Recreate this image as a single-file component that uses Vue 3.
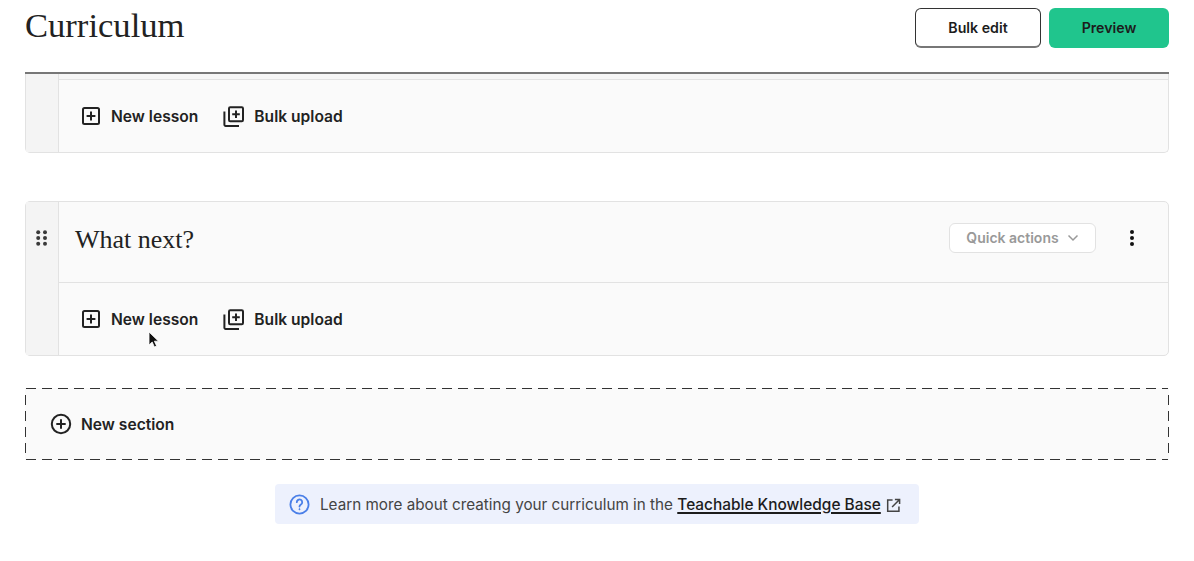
<script setup>
const actions = [
  { id: 'lesson', label: 'New lesson' },
  { id: 'bulk', label: 'Bulk upload' },
]
</script>

<template>
  <div class="page">
    <header class="topbar">
      <h1 class="title">Curriculum</h1>
      <div class="top-buttons">
        <button class="btn btn-outline">Bulk edit</button>
        <button class="btn btn-green">Preview</button>
      </div>
    </header>

    <section class="card card-clipped">
      <div class="rail"></div>
      <div class="card-main">
        <div class="clip-strip"></div>
        <div class="actions">
          <span v-for="a in actions" :key="a.id" class="action">
            <svg v-if="a.id === 'lesson'" class="ico" width="20" height="20" viewBox="0 0 20 20" fill="none" stroke="#222" stroke-width="2">
              <rect x="2" y="2" width="16" height="16" rx="1.500" />
              <path d="M10 5.600v8.800M5.600 10h8.800" />
            </svg>
            <svg v-else class="ico" width="21" height="21" viewBox="0 0 21 21" fill="none" stroke="#222" stroke-width="2">
              <rect x="6" y="1.200" width="14" height="14" rx="1.200" />
              <path d="M13 4.400v7.600M9.200 8.200h7.600" />
              <path d="M1.400 5.500v13.300a1.200 1.200 0 0 0 1.200 1.200H16" />
            </svg>
            <span class="label">{{ a.label }}</span>
          </span>
        </div>
      </div>
    </section>

    <section class="card card-full">
      <div class="rail">
        <svg class="grip" width="12" height="16" viewBox="0 0 12 16" fill="#3a3a3a">
          <circle cx="2.200" cy="2.300" r="2" /><circle cx="9" cy="2.300" r="2" />
          <circle cx="2.200" cy="8" r="2" /><circle cx="9" cy="8" r="2" />
          <circle cx="2.200" cy="13.700" r="2" /><circle cx="9" cy="13.700" r="2" />
        </svg>
      </div>
      <div class="card-main">
        <div class="section-head">
          <h2 class="section-title">What next?</h2>
          <button class="quick">
            Quick actions
            <svg width="12" height="8" viewBox="0 0 12 8" fill="none" stroke="#999" stroke-width="1.500"><path d="M1.500 1.500 6 6l4.500-4.500" /></svg>
          </button>
          <svg class="kebab" width="6" height="16" viewBox="0 0 6 16" fill="#111">
            <circle cx="3" cy="2" r="2" /><circle cx="3" cy="8" r="2" /><circle cx="3" cy="14" r="2" />
          </svg>
        </div>
        <div class="actions actions-lower">
          <span v-for="a in actions" :key="a.id" class="action">
            <svg v-if="a.id === 'lesson'" class="ico" width="20" height="20" viewBox="0 0 20 20" fill="none" stroke="#222" stroke-width="2">
              <rect x="2" y="2" width="16" height="16" rx="1.500" />
              <path d="M10 5.600v8.800M5.600 10h8.800" />
            </svg>
            <svg v-else class="ico" width="21" height="21" viewBox="0 0 21 21" fill="none" stroke="#222" stroke-width="2">
              <rect x="6" y="1.200" width="14" height="14" rx="1.200" />
              <path d="M13 4.400v7.600M9.200 8.200h7.600" />
              <path d="M1.400 5.500v13.300a1.200 1.200 0 0 0 1.200 1.200H16" />
            </svg>
            <span class="label">{{ a.label }}</span>
          </span>
        </div>
      </div>
      <svg class="cursor" width="12" height="18" viewBox="0 0 12 18">
        <path d="M1 1v13l3.200-3 2.200 5 2.200-1-2.200-4.800H10.500z" fill="#111" stroke="#fff" stroke-width=".8" />
      </svg>
    </section>

    <div class="new-section">
      <svg class="ico" width="22" height="22" viewBox="0 0 22 22" fill="none" stroke="#222" stroke-width="2">
        <circle cx="11" cy="11" r="9.200" />
        <path d="M11 6.300v9.400M6.300 11h9.400" />
      </svg>
      <span class="label">New section</span>
    </div>

    <div class="help-wrap">
      <div class="help">
        <svg class="ico" width="21" height="21" viewBox="0 0 21 21" fill="none" stroke="#4a7fe8" stroke-width="1.800">
          <circle cx="10.500" cy="10.500" r="9.100" />
          <path d="M7.800 8.200a2.700 2.700 0 1 1 4.100 2.300c-.9.600-1.400 1-1.400 2.100" stroke-linecap="round" />
          <circle cx="10.500" cy="15.200" r=".6" fill="#4a7fe8" stroke-width=".8" />
        </svg>
        <span class="help-text label">Learn more about creating your curriculum in the <a class="help-link">Teachable Knowledge Base</a></span>
        <svg class="ico ext" width="15" height="15" viewBox="0 0 16 16" fill="none" stroke="#444" stroke-width="1.600">
          <path d="M7 2.200H1.800v12h12V9" />
          <path d="M6.500 9.500 14.200 1.800M9.500 1.500h5v5" />
        </svg>
      </div>
    </div>
  </div>
</template>

<style>
html, body { background: #fff; }
</style>

<style scoped>
.page {
  width: 1194px;
  height: 561px;
  overflow: hidden;
  box-sizing: border-box;
  padding: 0 25px;
  font-family: Inter, "Liberation Sans", sans-serif;
  color: #1c1c1c;
}
.topbar {
  height: 74px;
  box-sizing: border-box;
  border-bottom: 2px solid #777;
  display: flex;
  justify-content: space-between;
  align-items: flex-start;
}
.title {
  margin: 3px 0 0;
  font: 400 34.600px/44px "Liberation Serif", serif;
  color: #222;
}
.top-buttons {
  display: flex;
  gap: 8px;
  margin-top: 8px;
}
.btn {
  height: 40px;
  box-sizing: border-box;
  border-radius: 6px;
  font: 600 14.200px/20px Inter, sans-serif;
  color: #1c1c1c;
  padding: 0;
}
.btn-outline {
  width: 126px;
  background: #fff;
  border: 1px solid #333;
  border-bottom-width: 2px;
  border-bottom-color: #777;
}
.btn-green {
  width: 120px;
  background: #20c58d;
  border: 0;
}
.card {
  display: flex;
  box-sizing: border-box;
  position: relative;
  background: #fafafa;
  border: 1px solid #e2e2e2;
}
.card-clipped {
  height: 79px;
  border-top: 0;
  border-radius: 0 0 5px 5px;
}
.card-full {
  height: 155px;
  margin-top: 48px;
  border-radius: 5px;
}
.rail {
  width: 33px;
  flex: none;
  background: #f4f4f4;
  border-right: 1px solid #e2e2e2;
  box-sizing: border-box;
  display: flex;
  justify-content: center;
  align-items: flex-start;
}
.grip { margin-top: 28px; }
.card-main {
  flex: 1;
  display: flex;
  flex-direction: column;
  min-width: 0;
}
.clip-strip {
  height: 5px;
  background: #f6f6f6;
  border-bottom: 1px solid #e2e2e2;
  flex: none;
}
.actions {
  flex: 1;
  display: flex;
  align-items: center;
  gap: 25px;
  padding-left: 22px;
  font: 600 15.600px/24px Inter, sans-serif;
  color: #222;
}
.action {
  display: inline-flex;
  align-items: center;
  gap: 10px;
}
.label { padding-top: 2px; }
.ico { flex: none; }
.section-head {
  height: 81px;
  flex: none;
  box-sizing: border-box;
  border-bottom: 1px solid #e2e2e2;
  display: flex;
  align-items: center;
  padding: 0 33px 8px 16px;
}
.section-title {
  margin: 0;
  padding-top: 4px;
  flex: 1;
  font: 400 26px/34px "Liberation Serif", serif;
  color: #222;
}
.quick {
  width: 147px;
  height: 30px;
  box-sizing: border-box;
  background: #fff;
  border: 1px solid #e2e2e2;
  border-radius: 6px;
  color: #999;
  font: 600 14px/20px Inter, sans-serif;
  display: flex;
  align-items: center;
  justify-content: center;
  gap: 8px;
  padding: 0;
}
.kebab { margin-left: 33px; }
.cursor {
  position: absolute;
  left: 122px;
  top: 129px;
}
.new-section {
  height: 72px;
  margin-top: 32px;
  box-sizing: border-box;
  display: flex;
  align-items: center;
  gap: 9px;
  padding-left: 25px;
  font: 600 15.600px/24px Inter, sans-serif;
  color: #222;
  background-color: #fafafa;
  background-image:
    repeating-linear-gradient(90deg, #333 0 10px, transparent 10px 16px),
    repeating-linear-gradient(90deg, #333 0 10px, transparent 10px 16px),
    repeating-linear-gradient(180deg, #333 0 10px, transparent 10px 16px),
    repeating-linear-gradient(180deg, #333 0 10px, transparent 10px 16px);
  background-size: calc(100% - 2px) 1px, calc(100% - 2px) 1px, 1px 58px, 1px 58px;
  background-position: 1px 0, 1px 100%, 0 7px, 100% 7px;
  background-repeat: no-repeat;
}
.help-wrap {
  display: flex;
  justify-content: center;
  margin-top: 24px;
}
.help {
  width: 644px;
  height: 40px;
  box-sizing: border-box;
  background: #edf1fd;
  border-radius: 4px;
  display: flex;
  align-items: center;
  padding-left: 14px;
  gap: 10px;
}
.help-text {
  font: 400 15.250px/24px Inter, sans-serif;
  color: #444;
  white-space: nowrap;
}
.help-link {
  color: #1c1c1c;
  font-size: 15.430px;
  font-weight: 500;
  text-decoration: underline;
  text-decoration-thickness: 1.500px;
  text-underline-offset: 2px;
}
.ext { margin-left: -5px; margin-top: 2px; }
</style>
